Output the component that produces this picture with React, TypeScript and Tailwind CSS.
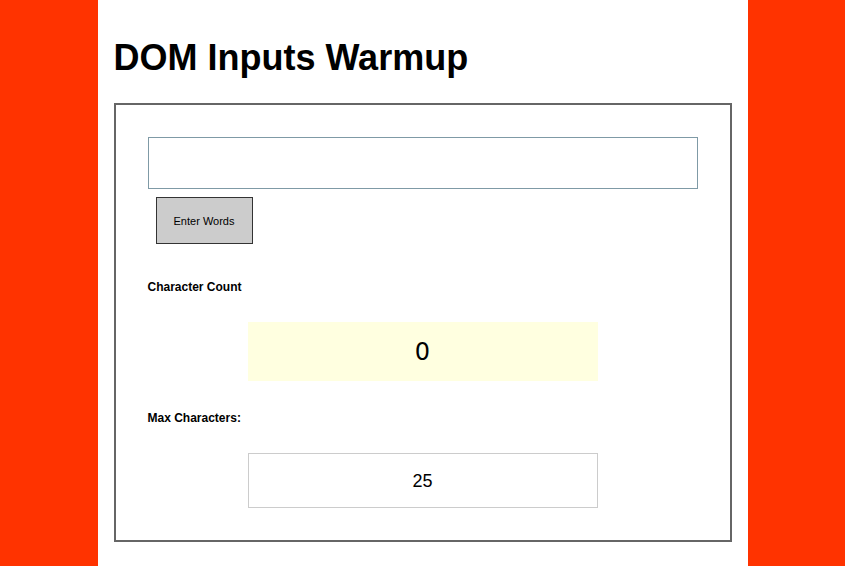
import { useState } from "react";

export default function App() {
  const [text, setText] = useState("");
  const [count, setCount] = useState(0);

  return (
    <div className="min-h-screen bg-[#ff3300] font-['Liberation_Sans',Arial,sans-serif] text-black">
      <div className="mx-auto min-h-screen w-[650px] bg-white px-4 pt-10">
        <h1 className="text-[36px] font-bold leading-[36px]">DOM Inputs Warmup</h1>

        <div className="mt-[27px] border-2 border-[#666666] px-8 pt-8 pb-8">
          <input
            type="text"
            value={text}
            onChange={(e) => setText(e.target.value)}
            className="block h-[52px] w-full border border-[#7f9aa6] px-2 text-base outline-none"
          />
          <button
            onClick={() => setCount(text.length)}
            className="ml-2 mt-2 block h-[47px] w-[97px] border border-[#333333] bg-[#cccccc] pt-[2px] text-[11px]"
          >
            Enter Words
          </button>

          <p className="mt-9 text-[12px] font-bold leading-[14px]">Character Count</p>
          <div className="mx-auto mt-7 flex h-[59px] w-[350px] items-center justify-center bg-[#ffffe0] font-['DejaVu_Sans',Verdana,sans-serif] text-[24px]">
            {count}
          </div>

          <p className="mt-[30px] text-[12px] font-bold leading-[14px]">Max Characters:</p>
          <div className="mx-auto mt-7 flex h-[55px] w-[350px] items-center justify-center border border-[#cccccc] pt-[2px] text-[18px]">
            25
          </div>
        </div>
      </div>
    </div>
  );
}
